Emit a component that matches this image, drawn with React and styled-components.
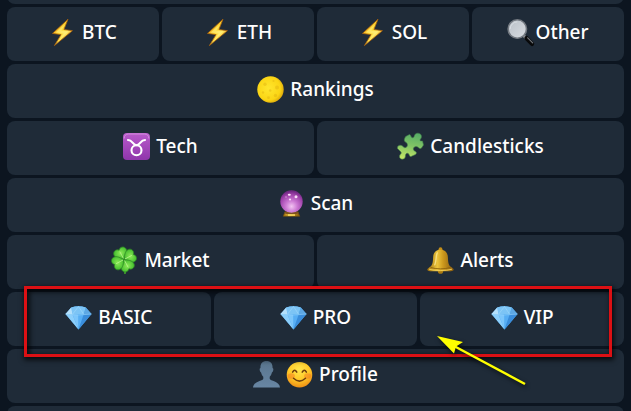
import React from "react";
import styled, { createGlobalStyle } from "styled-components";

const GlobalStyle = createGlobalStyle`
  *, *::before, *::after { box-sizing: border-box; }
  body {
    margin: 0;
    background: #0c1520;
    font-family: "Noto Sans", "Open Sans", sans-serif;
  }
`;

const Screen = styled.main`
  height: 100vh;
  overflow: hidden;
  padding: 0 7px;
  background: #0c1520;
`;

const Keyboard = styled.div`
  display: flex;
  flex-direction: column;
  gap: 3px;
  margin-top: -50px;
`;

const Row = styled.div`
  position: relative;
  display: grid;
  grid-auto-flow: column;
  grid-auto-columns: minmax(0, 1fr);
  gap: 3px;
`;

const Blank = styled.div`
  height: 54px;
  border-radius: 8px;
  background: #1f2b38;
`;

const Key = styled.button`
  display: flex;
  align-items: center;
  justify-content: center;
  gap: ${(p) => (p.$tight ? 1 : 6)}px;
  height: 54px;
  padding: 0 0 3px;
  border: 0;
  border-radius: 8px;
  background: #1f2b38;
  color: #fff;
  font: 500 19px/26px "Noto Sans", "Open Sans", sans-serif;
  white-space: nowrap;
  cursor: pointer;
`;

const Label = styled.span`
  padding-bottom: 2px;
`;

const Glyph = styled.svg`
  flex: none;
  width: 27px;
  height: 27px;
  overflow: visible;
`;

const Highlight = styled.div`
  position: absolute;
  z-index: 1;
  top: -6px;
  right: 12px;
  bottom: -11px;
  left: 17px;
  border: 3px solid #dc1014;
  box-shadow: 1px 2px 5px 1px rgba(0, 0, 0, 0.75), inset 2px 2px 5px 1px rgba(0, 0, 0, 0.7);
  pointer-events: none;
`;

const Arrow = styled.svg`
  position: absolute;
  z-index: 2;
  top: 40px;
  right: 94px;
  width: 96px;
  height: 58px;
  filter: drop-shadow(1px 2px 2px rgba(0, 0, 0, 0.7));
  pointer-events: none;
`;

const Icon = ({ children }) => (
  <Glyph viewBox="0 0 27 27" aria-hidden="true">
    {children}
  </Glyph>
);

const Gradients = styled.svg`
  position: absolute;
  width: 0;
  height: 0;
`;

const Defs = () => (
  <Gradients aria-hidden="true">
    <defs>
      <linearGradient id="bolt" x1="0" y1="0" x2="1" y2="1">
        <stop offset="0" stopColor="#ee9210" />
        <stop offset=".45" stopColor="#fcd935" />
        <stop offset=".6" stopColor="#ffe65c" />
        <stop offset="1" stopColor="#e27c0a" />
      </linearGradient>
      <radialGradient id="moon" cx=".42" cy=".45" r=".6">
        <stop offset="0" stopColor="#ffe62e" />
        <stop offset=".75" stopColor="#fbd514" />
        <stop offset="1" stopColor="#dba70b" />
      </radialGradient>
      <linearGradient id="lens" x1="0" y1="0" x2="1" y2="1">
        <stop offset="0" stopColor="#b9c0c7" />
        <stop offset="1" stopColor="#d9dde2" />
      </linearGradient>
      <linearGradient id="taurus" x1="0" y1="0" x2="0" y2="1">
        <stop offset="0" stopColor="#b95bcb" />
        <stop offset="1" stopColor="#8f35ab" />
      </linearGradient>
      <linearGradient id="puzzle" x1=".6" y1="0" x2=".4" y2="1">
        <stop offset="0" stopColor="#57ad66" />
        <stop offset=".5" stopColor="#83c565" />
        <stop offset="1" stopColor="#c4e666" />
      </linearGradient>
      <radialGradient id="orb" cx=".5" cy=".72" r=".68">
        <stop offset="0" stopColor="#f3c4f2" />
        <stop offset=".38" stopColor="#cc78d3" />
        <stop offset=".8" stopColor="#9c3fa8" />
        <stop offset="1" stopColor="#6f2882" />
      </radialGradient>
      <linearGradient id="gold" x1="0" y1="0" x2="1" y2="0">
        <stop offset="0" stopColor="#9c6d0c" />
        <stop offset=".38" stopColor="#ecc53c" />
        <stop offset=".6" stopColor="#cc991d" />
        <stop offset="1" stopColor="#85590f" />
      </linearGradient>
      <radialGradient id="leaf" cx=".5" cy=".4" r=".65">
        <stop offset="0" stopColor="#8eea58" />
        <stop offset=".7" stopColor="#4cc233" />
        <stop offset="1" stopColor="#2b9022" />
      </radialGradient>
      <linearGradient id="person" x1="0" y1="0" x2="0" y2="1">
        <stop offset="0" stopColor="#59758e" />
        <stop offset="1" stopColor="#6886a3" />
      </linearGradient>
      <radialGradient id="face" cx=".48" cy=".3" r=".72">
        <stop offset="0" stopColor="#ffe54c" />
        <stop offset=".55" stopColor="#ffc928" />
        <stop offset="1" stopColor="#ee8c14" />
      </radialGradient>
    </defs>
  </Gradients>
);

const Bolt = () => (
  <Icon>
    <path d="M19 .2 3.500 14.400l8.600 1.200L5.400 26.600l18-14.900-8.500-1.200Z" fill="url(#bolt)" stroke="#a9620c" strokeWidth=".8" strokeLinejoin="round" />
    <path d="m15.800 5.500-9.200 8.100 8.200 1-3.900 5.500 8.800-7.500-7.400-1.100Z" fill="#fff48c" opacity=".55" />
  </Icon>
);

const Moon = () => (
  <Icon>
    <circle cx="13.5" cy="13.5" r="13.2" fill="url(#moon)" />
    <g fill="#d9a60d" opacity=".35">
      <circle cx="8" cy="8.2" r="1.7" />
      <circle cx="16.5" cy="5" r="1.1" />
      <circle cx="20" cy="11.5" r="2" />
      <circle cx="13.2" cy="14.5" r="1.3" />
      <circle cx="6" cy="16.5" r="1.2" />
      <circle cx="18.5" cy="19.5" r="1.7" />
      <circle cx="11.5" cy="21.7" r="1.4" />
    </g>
  </Icon>
);

const Magnifier = () => (
  <Icon>
    <path d="m16.5 16.5 3.4 3.4" stroke="#8c9095" strokeWidth="3" />
    <path d="m19.600 19.200 5.400 5.600" stroke="#08090a" strokeWidth="4.4" strokeLinecap="round" />
    <path d="m20.700 18.800 5 5.100" stroke="#73777c" strokeWidth="1.2" strokeLinecap="round" />
    <circle cx="10.3" cy="10" r="9.2" fill="url(#lens)" stroke="#737980" strokeWidth="1.6" />
    <path d="M3.2 10a7.1 7.1 0 0 1 7.1-7.1" fill="none" stroke="#e9edf0" strokeWidth=".8" opacity=".7" />
  </Icon>
);

const Taurus = () => (
  <Icon>
    <rect width="27" height="27" rx="4" fill="url(#taurus)" />
    <path d="M1.2 5.5C1.2 2.7 2.7 1 5.5 1h16c2.8 0 4.3 1.7 4.3 4.5" fill="none" stroke="#d692df" strokeWidth=".9" />
    <g fill="none" stroke="#fff" strokeWidth="2.1" strokeLinecap="round">
      <path d="M5 7c4.9 0 4.2 5.2 8.5 5.2S17.1 7 22 7" />
      <circle cx="13.5" cy="17.3" r="5" />
    </g>
  </Icon>
);

const Puzzle = () => (
  <Icon>
    <path
      d="M8.700 3.500 12.500 1.500C14 1.500 13.500 4.500 15.500 4.700 18 5 16.500.5 20.500.2 24.500 0 25.500 4 23.500 6 22 8 24 8 25.500 8L26.500 12 24.500 15C22.500 17 21.500 13.500 19 13.500 16 13.700 15.500 17 18 18.300 19.500 19 20 20 18.500 21.500L14 23.500C12 24 12.800 21 10.700 20.300 8.500 20 8.500 22 8.300 24 7.500 27 2.500 27 2.500 23.500 2.500 21 5 21 4 19L.5 15.500C0 13 2 12 4 12.300 6 12.500 6.500 15.500 9 14.500 11.500 13 10.500 10 8.500 9 6.500 8.300 7.500 5 8.700 3.500Z"
      fill="url(#puzzle)"
      stroke="#427d4b"
      strokeWidth=".6"
    />
  </Icon>
);

const CrystalBall = () => (
  <Icon>
    <path d="m7 22.2-1.8 4h16.6l-1.8-4Z" fill="url(#gold)" stroke="#76500d" strokeWidth=".7" />
    <circle cx="13.5" cy="11.5" r="11.2" fill="url(#orb)" />
    <path d="M7 21.3q6.5 3.4 13 0l.8 2q-7.3 2.4-14.6 0Z" fill="#7c501f" />
    <g fill="#ffe9fc">
      <ellipse cx="11.3" cy="4.7" rx="1.5" ry="1" />
      <circle cx="18" cy="6.7" r="1.5" opacity=".9" />
      <circle cx="12" cy="9.5" r="1.1" opacity=".9" />
      <circle cx="8" cy="7" r=".7" opacity=".6" />
    </g>
    <path d="M10 25h7" stroke="#ffe36b" strokeWidth="1.4" />
  </Icon>
);

const Clover = () => {
  const leaf = "M0 0C-2.5-2-6.400-4-6.100-7.600c.3-3.300 4.300-4.200 6.100-1.800 1.800-2.400 5.800-1.500 6.100 1.800C6.400-4 2.500-2 0 0Z";
  return (
    <Icon>
      <path d="M12.8 13c1.2 4.6 1.9 8.4 1.2 13.1" fill="none" stroke="#43a62c" strokeWidth="1.9" strokeLinecap="round" />
      {[-28, 62, 152, 242].map((angle) => (
        <g key={angle} transform={`translate(13 12.5) rotate(${angle}) scale(1.12)`}>
          <path d={leaf} fill="url(#leaf)" stroke="#2d8725" strokeWidth=".6" />
          <path d="M0-1v-7" stroke="#b6f28a" strokeWidth=".7" />
        </g>
      ))}
    </Icon>
  );
};

const Bell = () => (
  <Icon>
    <circle cx="13.5" cy="2.2" r="1.9" fill="#c38d17" />
    <circle cx="13.5" cy="24.2" r="2.6" fill="#a87912" />
    <path d="M13.5 2.7c5 0 7.2 3.1 7.4 7.7.2 5.6.8 7.8 3.4 9.7l2 1.7c1.2 1.4-.4 2.3-2.4 2.4H3.1C1.1 24.1-.5 23.2.7 21.8l2-1.7c2.6-1.9 3.2-4.1 3.4-9.7.2-4.6 2.4-7.7 7.4-7.7Z" fill="url(#gold)" />
    <path d="M3.7 20.5c5 1.8 14.6 1.8 19.6 0" fill="none" stroke="#8c620d" strokeWidth=".9" />
    <path d="M2 22.2c6.2 1.8 16.8 1.8 23 0" fill="none" stroke="#f1cf5a" strokeWidth=".9" />
    <path d="M10.2 6c-1.5 3-.7 8-2.4 11.8" fill="none" stroke="#fff0a0" strokeWidth="1.4" opacity=".7" strokeLinecap="round" />
  </Icon>
);

const Diamond = () => (
  <Icon>
    <path d="M6.2 3.4Q13.5 1 20.8 3.4l5.7 6.7-13 15.5L.5 10.1Z" fill="#4faaf0" />
    <path d="M6.2 3.4Q13.5 1 20.8 3.4L18.7 10H7.5Z" fill="#7cc4f5" />
    <path d="M6.2 3.4.5 10.1l7 .2Z" fill="#b5e0fb" />
    <path d="m20.8 3.4 5.7 6.7-7.8.2Z" fill="#5da7e3" />
    <path d="m.5 10.1 7 .3 6 15.2Z" fill="#8ccffb" />
    <path d="m7.5 10.4 6 15.2V10.8Z" fill="#7cc6fb" />
    <path d="m18.7 10.4-5.2 15.2V10.8Z" fill="#57aef4" />
    <path d="m26.5 10.1-7.8.3-5.2 15.2Z" fill="#3a8ddb" />
    <path d="M.5 10.1q13 1.7 26 0M7.5 10.3l6-7.8 5.2 7.8" fill="none" stroke="#a9dcfb" strokeWidth=".5" />
  </Icon>
);

const Person = () => (
  <Icon>
    <path d="M13.5 0c4.3 0 6.4 3 6 7.1 1.5.4.8 3.8-.6 4.3-.5 2.2-1.4 3.4-2.2 4.3v2.1c.3 2.3 9.8 2.3 10.3 8.7H0c.5-6.4 10-6.4 10.3-8.7v-2.1c-.8-.9-1.7-2.1-2.2-4.3-1.4-.5-2.1-3.9-.6-4.3C7.1 3 9.2 0 13.5 0Z" fill="url(#person)" />
  </Icon>
);

const Smile = () => (
  <Icon>
    <circle cx="13.5" cy="13.7" r="12.8" fill="url(#face)" />
    <ellipse cx="5.3" cy="15" rx="3.6" ry="2.8" fill="#f36b20" opacity=".42" />
    <ellipse cx="21.7" cy="15" rx="3.6" ry="2.8" fill="#f36b20" opacity=".42" />
    <g fill="none" stroke="#70400e" strokeWidth="1.5" strokeLinecap="round">
      <path d="M6.6 11.2q2-4 4.2 0" />
      <path d="M16.2 11.2q2.2-4 4.2 0" />
      <path d="M7.5 17.3q6 5.6 12 0" />
    </g>
  </Icon>
);

const rows = [
  [
    { label: "BTC", icons: [Bolt] },
    { label: "ETH", icons: [Bolt] },
    { label: "SOL", icons: [Bolt] },
    { label: "Other", icons: [Magnifier], tight: true },
  ],
  [{ label: "Rankings", icons: [Moon] }],
  [
    { label: "Tech", icons: [Taurus] },
    { label: "Candlesticks", icons: [Puzzle] },
  ],
  [{ label: "Scan", icons: [CrystalBall] }],
  [
    { label: "Market", icons: [Clover] },
    { label: "Alerts", icons: [Bell] },
  ],
  [
    { label: "BASIC", icons: [Diamond] },
    { label: "PRO", icons: [Diamond] },
    { label: "VIP", icons: [Diamond] },
  ],
  [{ label: "Profile", icons: [Person, Smile] }],
];

const Callout = () => (
  <>
    <Highlight />
    <Arrow viewBox="0 0 96 58" aria-hidden="true">
      <path d="M20 14 91 52" stroke="#ff0" strokeWidth="2.5" />
      <path d="m3 4 26 6-7 4.500-2 7Z" fill="#ff0" />
    </Arrow>
  </>
);

export default function App() {
  return (
    <Screen>
      <GlobalStyle />
      <Defs />
      <Keyboard>
        <Blank />
        {rows.map((keys) => (
          <Row key={keys[0].label}>
            {keys.map(({ label, icons, tight }) => (
              <Key key={label} type="button" $tight={tight}>
                {icons.map((Art, i) => (
                  <Art key={i} />
                ))}
                <Label>{label}</Label>
              </Key>
            ))}
            {keys[0].label === "BASIC" && <Callout />}
          </Row>
        ))}
        <Blank />
      </Keyboard>
    </Screen>
  );
}
